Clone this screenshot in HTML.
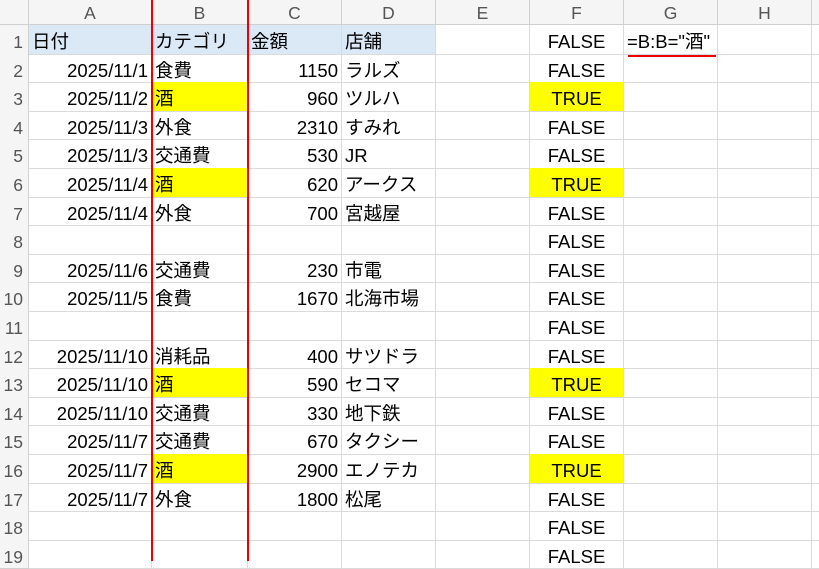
<!DOCTYPE html><html><head><meta charset="utf-8"><style>
body{margin:0;width:819px;height:561px;overflow:hidden;background:#fff;font-family:"Liberation Sans","Noto Sans CJK JP",sans-serif;position:relative}
.c{position:absolute;box-sizing:border-box;border-right:1px solid #dadada;border-bottom:1px solid #dadada;font-size:18.5px;white-space:nowrap;overflow:hidden;padding:5px 3px 0;color:#000}
.h{background:#f5f5f5;color:#555;text-align:center;font-size:17.5px;border-color:#d0d0d0}
.r{text-align:right}.m{text-align:center}.y{background:#ffff00}.b{background:#dbe8f6}
</style></head><body>
<div id="g"></div>
<script>
const X=[0,29,152,248,342,436,530,624,718,812,900];
const T=25,H=28.6;
const data=[
["日付","カテゴリ","金額","店舗","","FALSE"],
["2025/11/1","食費","1150","ラルズ","","FALSE"],
["2025/11/2","酒","960","ツルハ","","TRUE"],
["2025/11/3","外食","2310","すみれ","","FALSE"],
["2025/11/3","交通費","530","JR","","FALSE"],
["2025/11/4","酒","620","アークス","","TRUE"],
["2025/11/4","外食","700","宮越屋","","FALSE"],
["","","","","","FALSE"],
["2025/11/6","交通費","230","市電","","FALSE"],
["2025/11/5","食費","1670","北海市場","","FALSE"],
["","","","","","FALSE"],
["2025/11/10","消耗品","400","サツドラ","","FALSE"],
["2025/11/10","酒","590","セコマ","","TRUE"],
["2025/11/10","交通費","330","地下鉄","","FALSE"],
["2025/11/7","交通費","670","タクシー","","FALSE"],
["2025/11/7","酒","2900","エノテカ","","TRUE"],
["2025/11/7","外食","1800","松尾","","FALSE"],
["","","","","","FALSE"],["","","","","","FALSE"]];
let h='';
const L=["","A","B","C","D","E","F","G","H",""];
for(let i=0;i<10;i++)h+=`<div class="c h" style="left:${X[i]}px;top:0;width:${X[i+1]-X[i]}px;height:${T}px;line-height:20px;padding-top:3px">${L[i]}</div>`;
for(let r=0;r<19;r++){const top=T+r*H,ht=H;
h+=`<div class="c h" style="left:0;top:${top}px;width:29px;height:${ht+1}px;line-height:24px;text-align:right;padding-right:5px">${r+1}</div>`;
for(let c=1;c<10;c++){let v='',cls='';const d=data[r];
if(c<=6)v=d[c-1];
if(c==1&&r>0)cls='r';if(c==3&&r>0)cls='r';if(c==6)cls='m';
if(r==0&&c<=4)cls+=' b';
if(c==2&&v=='酒')cls+=' y';if(c==6&&v=='TRUE')cls+=' y';
if(c==7&&r==0)v='=B:B="酒"';
h+=`<div class="c ${cls}" style="left:${X[c]}px;top:${top}px;width:${X[c+1]-X[c]}px;height:${ht+1}px;line-height:24px">${v}</div>`;}}
h+=`<div style="position:absolute;left:151px;top:0;width:2px;height:561px;background:#e00"></div>`;
h+=`<div style="position:absolute;left:247px;top:0;width:2px;height:561px;background:#e00"></div>`;
h+=`<div style="position:absolute;left:628px;top:55px;width:88px;height:2px;background:#e00"></div>`;
document.getElementById('g').innerHTML=h;
</script></body></html>
